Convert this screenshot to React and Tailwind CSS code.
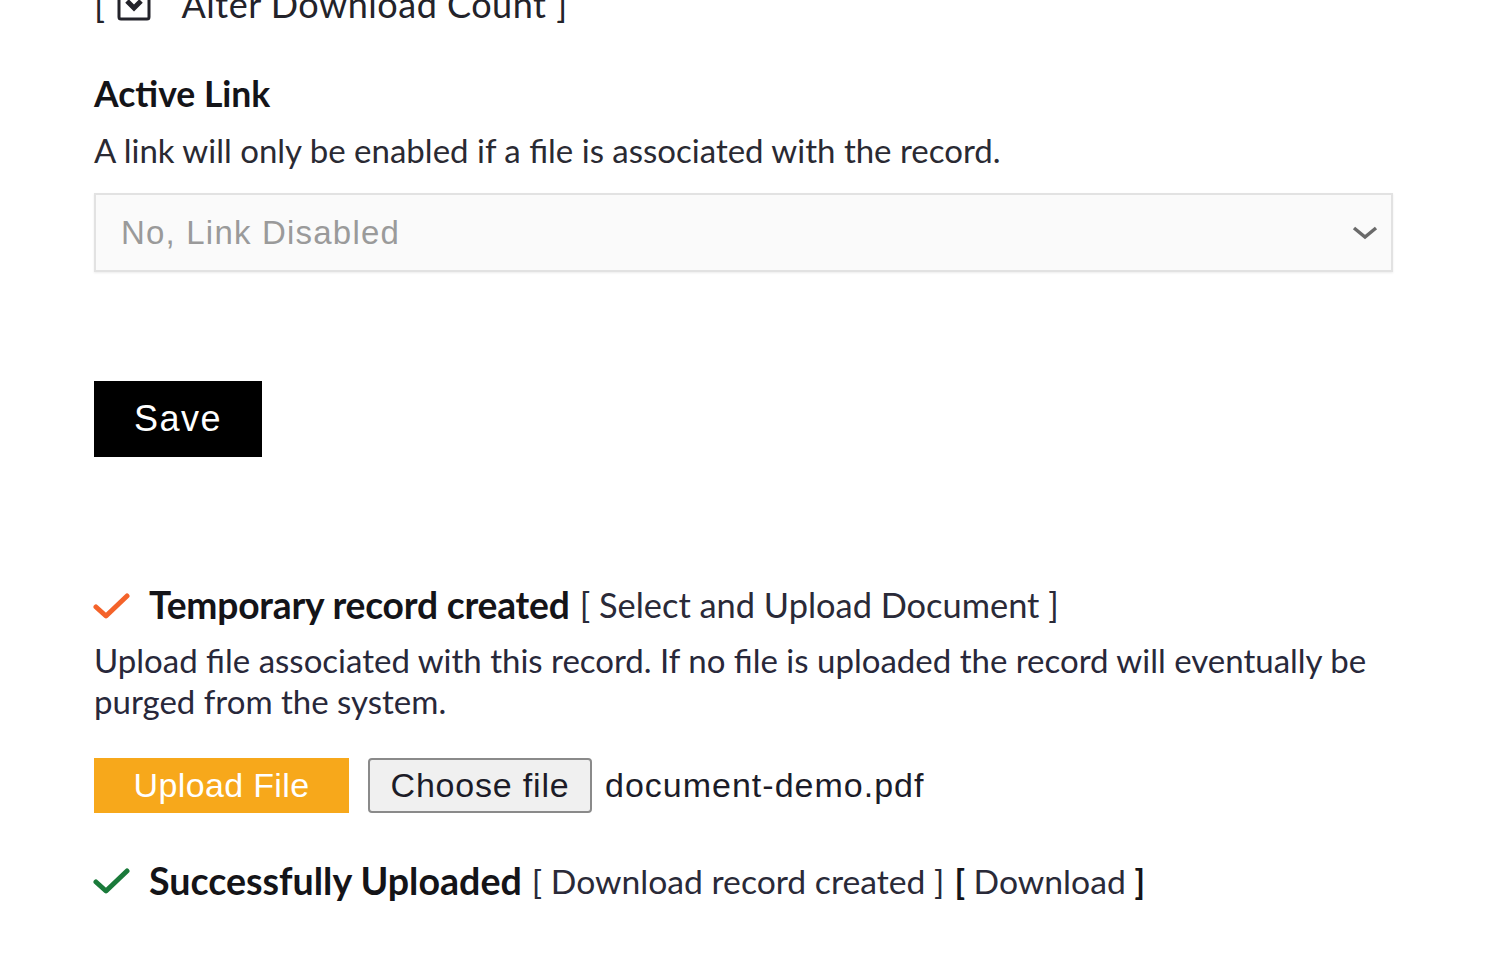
import React from "react";

const lato = { fontFamily: "Lato, 'Open Sans', sans-serif" };
const arial = { fontFamily: "'Liberation Sans', Arial, sans-serif" };

export default function App() {
  return (
    <div className="w-[1500px] h-[963px] overflow-hidden bg-white text-[#1f1f24]" style={lato}>
      <div className="pl-[94px] pr-[106px]">
        {/* cut-off top row */}
        <div className="-mt-[16px] h-[40px] flex items-center text-[36px] leading-[40px] tracking-[0.5px] text-[#23232a]">
          <span>[</span>
          <span className="ml-[10px] inline-flex items-center">
            <svg width="36" height="36" viewBox="0 0 36 36">
              <rect x="3" y="3" width="30" height="30" rx="2" fill="none" stroke="#23232a" strokeWidth="3" />
              <path d="M11 15 L18 22 L25 15" fill="none" stroke="#23232a" strokeWidth="5" />
            </svg>
          </span>
          <span className="ml-[30px]">Alter Download Count ]</span>
        </div>

        <h2 className="mt-[49px] text-[35.5px] leading-[42px] font-bold text-[#141418]">Active Link</h2>
        <p className="mt-[15px] text-[33px] leading-[40px] text-[#2a2a33]">
          A link will only be enabled if a file is associated with the record.
        </p>

        <div className="mt-[23px] w-[1299px] h-[79px] border-2 border-[#e2e2e2] bg-[#fafafa] shadow-[0_1px_2px_rgba(0,0,0,0.08)] flex items-center justify-between pl-[25px] pr-[12px]">
          <span className="text-[33px] tracking-[1.2px] text-[#9a9a9a]" style={arial}>
            No, Link Disabled
          </span>
          <svg width="28" height="16" viewBox="0 0 28 16">
            <path d="M3 3 L14 12 L25 3" fill="none" stroke="#6a6a6a" strokeWidth="3.5" />
          </svg>
        </div>

        <button
          className="mt-[109px] w-[168px] h-[76px] bg-black text-white text-[36px] tracking-[1.5px] flex items-center justify-center"
          style={arial}
        >
          Save
        </button>

        <div className="mt-[126px] flex items-center h-[44px]">
          <svg width="38" height="30" viewBox="0 0 38 30" className="-ml-[1px]">
            <path d="M3 17 L13 26 L34 6" fill="none" stroke="#f4632a" strokeWidth="5" strokeLinecap="round" strokeLinejoin="round" />
          </svg>
          <span className="ml-[18px] text-[37.2px] font-bold tracking-[-0.2px] text-[#141418]">Temporary record created</span>
          <span className="ml-[10px] text-[34.4px] text-[#2a2a38]">[ Select and Upload Document ]</span>
        </div>

        <p className="mt-[13px] w-[1290px] text-[33px] leading-[41px] text-[#28283a]">
          Upload file associated with this record. If no file is uploaded the record will eventually be purged from the system.
        </p>

        <div className="mt-[36px] flex items-center" style={arial}>
          <div className="w-[255px] h-[55px] bg-[#f7a81b] text-white text-[34px] tracking-[0.35px] flex items-center justify-center">
            Upload File
          </div>
          <div className="ml-[19px] w-[224px] h-[55px] rounded-[4px] border-2 border-[#8a8a8a] bg-[#f0f0f0] text-[#1c1c28] text-[34px] tracking-[0.8px] flex items-center justify-center">
            Choose file
          </div>
          <span className="ml-[13px] text-[34px] tracking-[1px] text-[#1c1c28]">document-demo.pdf</span>
        </div>

        <div className="mt-[46px] flex items-center h-[44px]">
          <svg width="38" height="30" viewBox="0 0 38 30" className="-ml-[1px]">
            <path d="M3 16 L13 25 L34 5" fill="none" stroke="#1a7a3a" strokeWidth="5" strokeLinecap="round" strokeLinejoin="round" />
          </svg>
          <span className="ml-[18px] text-[37.6px] font-bold tracking-[0px] text-[#141418]">Successfully Uploaded</span>
          <span className="ml-[10px] text-[33.7px] text-[#2a2a38]">[ Download record created ]</span>
          <span className="ml-[10px] text-[33.7px] text-[#2a2a38]">
            <span className="font-bold text-[#141418]">[</span> Download <span className="font-bold text-[#141418]">]</span>
          </span>
        </div>
      </div>
    </div>
  );
}
